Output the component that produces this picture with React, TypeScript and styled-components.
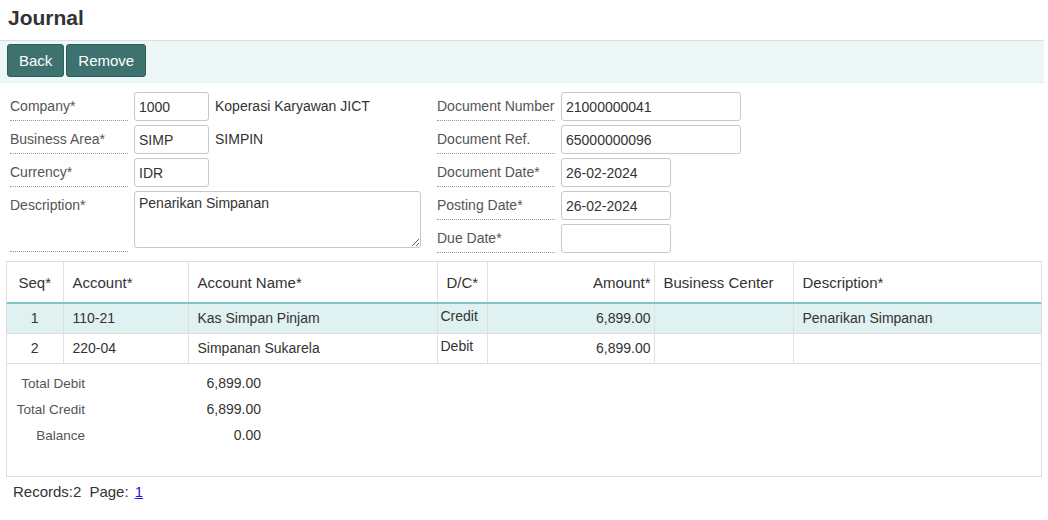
import React from "react";
import styled, { createGlobalStyle } from "styled-components";

const GlobalStyle = createGlobalStyle`
  html, body { margin: 0; padding: 0; background: #fff; }
  body { font-family: "Liberation Sans", Arial, sans-serif; color: #333; }
  * { box-sizing: border-box; }
`;

const Page = styled.div`
  width: 1048px;
  height: 520px;
  overflow: hidden;
`;

const Title = styled.h1`
  margin: 6px 0 10px 0;
  padding: 0 8px;
  height: 24px;
  line-height: 24px;
  font-size: 21px;
  font-weight: bold;
  color: #333;
`;

const Toolbar = styled.div`
  width: 1044px;
  display: flex;
  gap: 2px;
  padding: 3px 7px 5px;
  background: #eef7f8;
  border-top: 1px solid #dedede;
  border-bottom: 1px solid #e4f2f2;
`;

const Button = styled.button`
  height: 33px;
  padding: 0 11px;
  font-family: "Liberation Sans", Arial, sans-serif;
  font-size: 15px;
  color: #fff;
  background: #3d726f;
  border: 1px solid #2f5d5a;
  border-radius: 3px;
  cursor: pointer;
`;

const Form = styled.div`
  display: flex;
  padding: 9px 0 0 10px;
  gap: 16px;
`;

const Column = styled.div<{ $width: number }>`
  width: ${(p) => p.$width}px;
  display: flex;
  flex-direction: column;
  gap: 4px;
`;

const Row = styled.div<{ $tall?: boolean }>`
  display: flex;
  align-items: flex-start;
  gap: 6px;
  height: ${(p) => (p.$tall ? 61 : 29)}px;
`;

const Label = styled.div`
  width: 118px;
  flex: none;
  align-self: stretch;
  font-size: 14px;
  line-height: 28px;
  color: #555;
  border-bottom: 1px dotted #9a9a9a;
  white-space: nowrap;
`;

const Input = styled.input<{ $width: number }>`
  width: ${(p) => p.$width}px;
  height: 29px;
  padding: 0 4px;
  font-family: "Liberation Sans", Arial, sans-serif;
  font-size: 14px;
  color: #333;
  background: #fff;
  border: 1px solid #c8c8c8;
  border-radius: 3px;
  outline: none;
`;

const TextArea = styled.textarea`
  width: 287px;
  height: 57px;
  padding: 3px 4px;
  font-family: "Liberation Sans", Arial, sans-serif;
  font-size: 14px;
  color: #333;
  border: 1px solid #c8c8c8;
  border-radius: 3px;
  resize: both;
  outline: none;
`;

const NameText = styled.span`
  font-size: 14px;
  line-height: 29px;
  color: #333;
  white-space: nowrap;
`;

const Grid = styled.div`
  margin: 8px 0 0 6px;
  width: 1036px;
  border: 1px solid #dedede;
`;

const Table = styled.table`
  width: 100%;
  border-collapse: collapse;
  table-layout: fixed;
`;

const Th = styled.th<{ $align?: string }>`
  height: 41px;
  padding: 0 ${(p) => (p.$align === "right" ? "3px" : "9px")};
  font-size: 15px;
  font-weight: normal;
  color: #333;
  text-align: ${(p) => p.$align || "left"};
  border-right: 1px solid #e0e0e0;
  border-bottom: 2px solid #7ec7c4;
  white-space: nowrap;
  &:last-child { border-right: none; }
`;

const Tr = styled.tr<{ $selected?: boolean }>`
  background: ${(p) => (p.$selected ? "#dff1f0" : "#fff")};
`;

const Td = styled.td<{ $align?: string }>`
  height: 30px;
  padding: 0 ${(p) => (p.$align === "right" ? "3px" : "9px")};
  font-size: 14px;
  color: #333;
  text-align: ${(p) => p.$align || "left"};
  border-right: 1px solid #e0e0e0;
  border-bottom: 1px solid #e0e0e0;
  white-space: nowrap;
  &:last-child { border-right: none; }
`;

const DcTd = styled.td`
  height: 30px;
  padding: 4px 3px 0;
  vertical-align: top;
  font-size: 14px;
  line-height: 16px;
  color: #333;
  border-right: 1px solid #e0e0e0;
  border-bottom: 1px solid #e0e0e0;
`;

const Summary = styled.div`
  height: 112px;
  padding-top: 7px;
  display: grid;
  grid-template-columns: 78px 176px;
  grid-auto-rows: 26px;
  align-content: start;
`;

const SumLabel = styled.div`
  font-size: 13.5px;
  line-height: 26px;
  color: #555;
  text-align: right;
`;

const SumValue = styled.div`
  font-size: 14px;
  line-height: 24px;
  color: #333;
  text-align: right;
`;

const Footer = styled.div`
  padding: 6px 0 0 13px;
  font-size: 15px;
  line-height: 17px;
  color: #333;
  display: flex;
  gap: 8px;
`;

const PageLink = styled.a`
  color: #1a1aee;
  text-decoration: underline;
  margin-left: 2px;
`;

const rows = [
  { seq: 1, account: "110-21", name: "Kas Simpan Pinjam", dc: "Credit", amount: "6,899.00", bc: "", desc: "Penarikan Simpanan" },
  { seq: 2, account: "220-04", name: "Simpanan Sukarela", dc: "Debit", amount: "6,899.00", bc: "", desc: "" },
];

export default function App() {
  return (
    <Page>
      <GlobalStyle />
      <Title>Journal</Title>
      <Toolbar>
        <Button>Back</Button>
        <Button>Remove</Button>
      </Toolbar>
      <Form>
        <Column $width={411}>
          <Row>
            <Label>Company*</Label>
            <Input $width={75} defaultValue="1000" />
            <NameText>Koperasi Karyawan JICT</NameText>
          </Row>
          <Row>
            <Label>Business Area*</Label>
            <Input $width={75} defaultValue="SIMP" />
            <NameText>SIMPIN</NameText>
          </Row>
          <Row>
            <Label>Currency*</Label>
            <Input $width={75} defaultValue="IDR" />
          </Row>
          <Row $tall>
            <Label>Description*</Label>
            <TextArea defaultValue="Penarikan Simpanan" />
          </Row>
        </Column>
        <Column $width={310}>
          <Row>
            <Label>Document Number</Label>
            <Input $width={180} defaultValue="21000000041" />
          </Row>
          <Row>
            <Label>Document Ref.</Label>
            <Input $width={180} defaultValue="65000000096" />
          </Row>
          <Row>
            <Label>Document Date*</Label>
            <Input $width={110} defaultValue="26-02-2024" />
          </Row>
          <Row>
            <Label>Posting Date*</Label>
            <Input $width={110} defaultValue="26-02-2024" />
          </Row>
          <Row>
            <Label>Due Date*</Label>
            <Input $width={110} defaultValue="" />
          </Row>
        </Column>
      </Form>
      <Grid>
        <Table>
          <colgroup>
            <col style={{ width: 56 }} />
            <col style={{ width: 125 }} />
            <col style={{ width: 249 }} />
            <col style={{ width: 50 }} />
            <col style={{ width: 167 }} />
            <col style={{ width: 139 }} />
            <col />
          </colgroup>
          <thead>
            <tr>
              <Th $align="center">Seq*</Th>
              <Th>Account*</Th>
              <Th>Account Name*</Th>
              <Th $align="center">D/C*</Th>
              <Th $align="right">Amount*</Th>
              <Th>Business Center</Th>
              <Th>Description*</Th>
            </tr>
          </thead>
          <tbody>
            {rows.map((r, i) => (
              <Tr key={r.seq} $selected={i === 0}>
                <Td $align="center">{r.seq}</Td>
                <Td>{r.account}</Td>
                <Td>{r.name}</Td>
                <DcTd>{r.dc}</DcTd>
                <Td $align="right">{r.amount}</Td>
                <Td>{r.bc}</Td>
                <Td>{r.desc}</Td>
              </Tr>
            ))}
          </tbody>
        </Table>
        <Summary>
          <SumLabel>Total Debit</SumLabel>
          <SumValue>6,899.00</SumValue>
          <SumLabel>Total Credit</SumLabel>
          <SumValue>6,899.00</SumValue>
          <SumLabel>Balance</SumLabel>
          <SumValue>0.00</SumValue>
        </Summary>
      </Grid>
      <Footer>
        <span>Records:2</span>
        <span>
          Page: <PageLink href="#">1</PageLink>
        </span>
      </Footer>
    </Page>
  );
}
